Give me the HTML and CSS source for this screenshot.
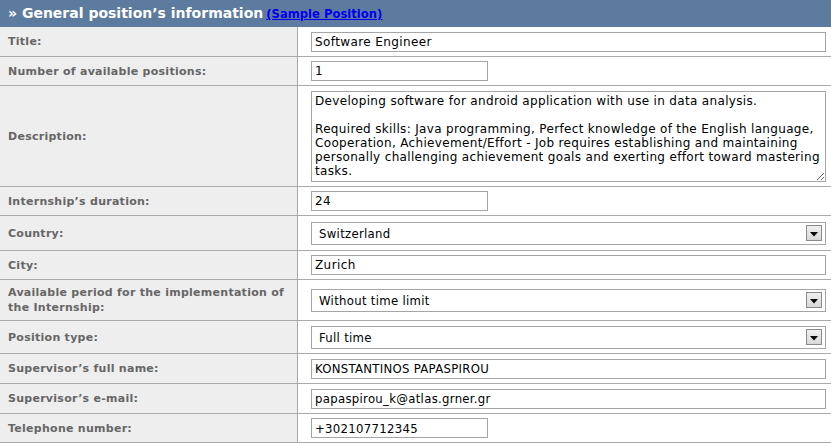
FILE: index.html
```html
<!DOCTYPE html>
<html>
<head>
<meta charset="utf-8">
<link rel="stylesheet" href="styles.css">
</head>
<body>
<div class="panel">
  <div class="head"><span class="head-title">» General position’s information</span> <a class="head-link" href="#">(Sample Position)</a></div>
  <div class="form">
    <div class="lab h30">Title:</div>
    <div class="val h30"><input class="inp wide verd" type="text" value="Software Engineer"></div>

    <div class="lab h29">Number of available positions:</div>
    <div class="val h29"><input class="inp short verd" type="text" value="1"></div>

    <div class="lab h101">Description:</div>
    <div class="val h101"><textarea class="area verd">Developing software for android application with use in data analysis.

Required skills: Java programming, Perfect knowledge of the English language, Cooperation, Achievement/Effort - Job requires establishing and maintaining personally challenging achievement goals and exerting effort toward mastering tasks.</textarea></div>

    <div class="lab h29">Internship’s duration:</div>
    <div class="val h29"><input class="inp short verd" type="text" value="24"></div>

    <div class="lab h35">Country:</div>
    <div class="val h35"><div class="sel"><span class="sel-text">Switzerland</span><span class="sel-btn"><svg width="8" height="5" viewBox="0 0 8 5"><path d="M0 0H8L4 4.5Z" fill="#000"/></svg></span></div></div>

    <div class="lab h29">City:</div>
    <div class="val h29"><input class="inp wide verd" type="text" value="Zurich"></div>

    <div class="lab h41">Available period for the implementation of the Internship:</div>
    <div class="val h41"><div class="sel"><span class="sel-text">Without time limit</span><span class="sel-btn"><svg width="8" height="5" viewBox="0 0 8 5"><path d="M0 0H8L4 4.5Z" fill="#000"/></svg></span></div></div>

    <div class="lab h33">Position type:</div>
    <div class="val h33"><div class="sel"><span class="sel-text">Full time</span><span class="sel-btn"><svg width="8" height="5" viewBox="0 0 8 5"><path d="M0 0H8L4 4.5Z" fill="#000"/></svg></span></div></div>

    <div class="lab h30">Supervisor’s full name:</div>
    <div class="val h30"><input class="inp wide sans" type="text" value="KONSTANTINOS PAPASPIROU"></div>

    <div class="lab h30">Supervisor’s e-mail:</div>
    <div class="val h30"><input class="inp wide sans" type="text" value="papaspirou_k@atlas.grner.gr"></div>

    <div class="lab h29">Telephone number:</div>
    <div class="val h29"><input class="inp short sans" type="text" value="+302107712345"></div>
  </div>
</div>
</body>
</html>
```

FILE: styles.css
```css
html, body {
  margin: 0;
  padding: 0;
  background: #ffffff;
}
.panel {
  width: 831px;
}
.head {
  height: 27px;
  background: #5d7b9e;
  box-sizing: border-box;
  padding: 0 0 0 8px;
  display: flex;
  align-items: baseline;
  gap: 3px;
  line-height: 26px;
}
.head-title {
  font-family: "DejaVu Sans", Verdana, sans-serif;
  font-weight: bold;
  font-size: 14px;
  color: #ffffff;
}
.head-link {
  font-family: "DejaVu Sans", Verdana, sans-serif;
  font-weight: bold;
  font-size: 11.6px;
  color: #0000ee;
  text-decoration: underline;
}
.form {
  display: grid;
  grid-template-columns: 298px 1fr;
}
.lab, .val {
  box-sizing: border-box;
  border-bottom: 1px solid #aaaaaa;
  display: flex;
  align-items: center;
}
.lab {
  background: #eeeeee;
  border-right: 1px solid #aaaaaa;
  padding: 0 8px;
  font-family: "DejaVu Sans", Verdana, sans-serif;
  font-weight: bold;
  font-size: 11px;
  letter-spacing: 0.27px;
  line-height: 15px;
  color: #666666;
}
.val {
  padding: 0 5px 0 13px;
}
.h29 { height: 29px; }
.h30 { height: 30px; }
.h33 { height: 33px; }
.h35 { height: 35px; }
.h41 { height: 41px; }
.h101 { height: 101px; }
.inp {
  box-sizing: border-box;
  height: 20px;
  border: 1px solid #a5a5a5;
  padding: 0 3px;
  margin: 0;
  color: #000;
  background: #fff;
  outline: none;
}
.verd {
  font-family: "DejaVu Sans", Verdana, sans-serif;
  font-size: 12px;
  letter-spacing: 0.4px;
}
.sans {
  font-family: "DejaVu Sans Condensed", "DejaVu Sans", sans-serif;
  font-size: 13px;
  letter-spacing: 0.3px;
}
.wide { width: 100%; }
.short { width: 177px; }
.area {
  box-sizing: border-box;
  width: 100%;
  height: 91px;
  border: 1px solid #a5a5a5;
  padding: 2px 1px 2px 3px;
  margin: 0;
  line-height: 14px;
  letter-spacing: 0.33px;
  color: #000;
  resize: both;
  overflow: hidden;
  outline: none;
}
.sel {
  box-sizing: border-box;
  width: 100%;
  height: 23px;
  border: 1px solid #a5a5a5;
  background: #fff;
  display: flex;
  align-items: center;
  justify-content: space-between;
  padding: 0 3px 0 7px;
}
.sel-text {
  font-family: "DejaVu Sans Condensed", "DejaVu Sans", sans-serif;
  font-size: 13px;
  letter-spacing: 0.3px;
  color: #000;
}
.sel-btn {
  box-sizing: border-box;
  width: 16px;
  height: 16px;
  border: 1px solid #8a8a8a;
  background: linear-gradient(#f0f0f0, #d8d8d8);
  display: flex;
  align-items: center;
  justify-content: center;
  padding-top: 2px;
}
```
